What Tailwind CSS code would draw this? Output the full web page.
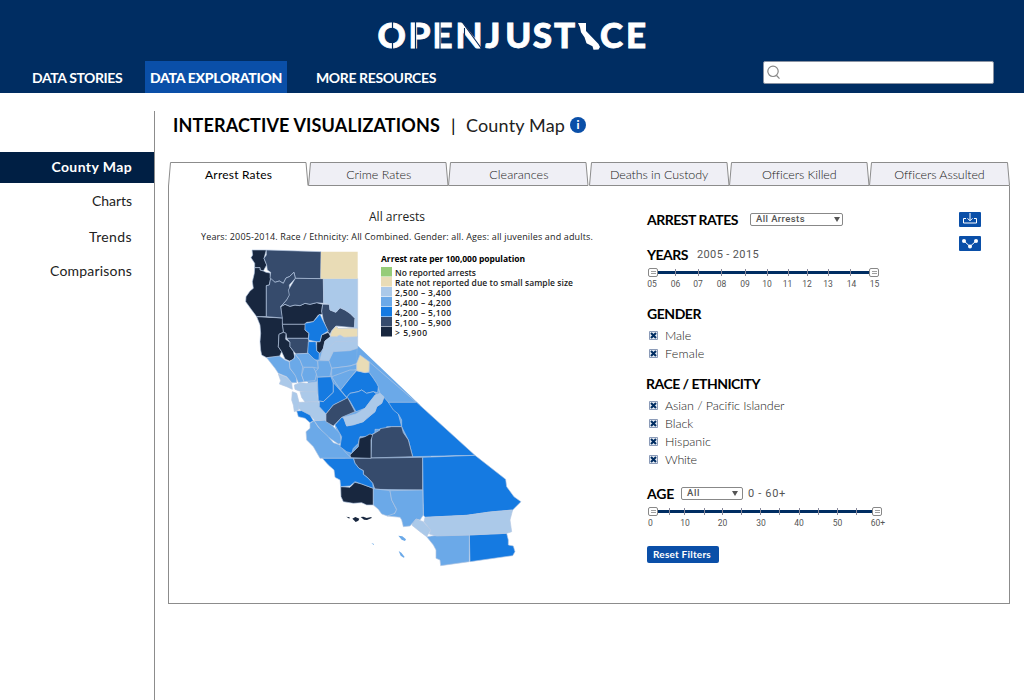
<!DOCTYPE html>
<html lang="en">
<head>
<meta charset="utf-8">
<title>OpenJustice – County Map</title>
<script src="https://cdn.jsdelivr.net/npm/@tailwindcss/browser@4"></script>
</head>
<body class="bg-white w-[1024px] h-[700px] overflow-hidden font-['Lato',sans-serif] text-black">
<svg class="hidden">
  <symbol id="tab" viewBox="0 0 141 25"><path d="M.5 24.500L2.500 1.500H138L140 24.500z" fill="#efeff5" stroke="#8c8c8c"/></symbol>
  <symbol id="check" viewBox="0 0 9 9"><path d="M.5.5h8v8h-8z" fill="#e8edf5" stroke="#8b9bb8"/><path d="M2 2l5 5M7 2l-5 5" stroke="#002d62" stroke-width="2.100"/></symbol>
</svg>
<header class="h-[93px] bg-[#002d62] relative">
  <svg class="block mx-auto w-[280px] h-[61px]" viewBox="372 0 280 61">
    <g font-family="Lato" font-weight="900" font-size="35" fill="#fff" stroke="#fff" stroke-width=".8">
      <text y="47.500" x="377.500 408.500 432.500 455.500 485.200 505.300 532.800 554">OPENJUST</text>
      <text y="47.500" x="600 626">CE</text>
    </g>
    <path d="M392.500 20v30M415.500 20v30M440 20v30" stroke="#002d62" stroke-width="1.200"/>
    <path d="M464.500 28v22M461.500 21l21 29" stroke="#002d62" stroke-width="1.100"/>
    <path d="M578 23h8v8l12.500 13 1.500 3-1.500 2.500-5 .3-1-3.500-6-3-2-6-3.500-5-1-5z" fill="#fff"/>
  </svg>
  <nav class="flex absolute left-0 top-[61px] h-8 text-white text-[14px] leading-[34px] font-bold whitespace-nowrap">
    <div class="w-[145px] pl-8"><span class="tracking-[-0.4px]">DATA STORIES</span></div>
    <div class="w-[142px] pl-[5px] bg-[#0a4fa8]"><span class="font-black tracking-[-0.3px]">DATA EXPLORATION</span></div>
    <div class="pl-[29px]"><span class="tracking-[-0.38px]">MORE RESOURCES</span></div>
  </nav>
  <div class="absolute left-[763px] top-[61px] w-[231px] h-[23px] bg-white border border-[#8a93a3] rounded-[2px]">
    <svg class="w-4 h-4 ml-[3px] mt-[3px]" viewBox="0 0 16 16" fill="none" stroke="#888" stroke-width="1.200"><circle cx="6" cy="6.300" r="5.200"/><path d="M9.500 10.500l3 3.200"/></svg>
  </div>
</header>
<div class="flex h-[607px]">
  <aside class="w-[155px] mt-[18px] border-r border-[#8c8c8c] pt-[41px] text-right text-[14px]">
    <div class="h-[31px] bg-[#001f44] text-white font-bold leading-[29px] pr-[22px]"><span class="tracking-[0.4px]">County Map</span></div>
    <div class="h-9 leading-9 pr-[22px] text-[#222]"><span class="tracking-[-0.05px]">Charts</span></div>
    <div class="h-9 leading-9 pr-[22px] text-[#222]"><span class="tracking-[0.39px]">Trends</span></div>
    <div class="h-9 leading-8 pr-[22px] text-[#222]"><span class="tracking-[0.2px]">Comparisons</span></div>
  </aside>
  <main class="w-[869px] pl-[13px]">
    <h1 class="flex items-center h-[64px] pl-[5px] text-[18px] whitespace-nowrap"><span class="font-bold w-[267px] tracking-[0.15px]">INTERACTIVE VISUALIZATIONS</span><span class="ml-[11px] w-[15px]">|</span><span class="w-[99px] tracking-[0.16px] text-[#222]">County Map</span>
      <svg class="w-4 h-4 ml-[5px]" viewBox="0 0 16 16"><circle cx="8" cy="8" r="8" fill="#0a4fa8"/><text x="8" y="12" text-anchor="middle" font-size="11.500" font-weight="900" font-family="Lato" fill="#fff">i</text></svg>
    </h1>
    <div class="mt-[4px] w-[842px]">
      <div class="grid grid-cols-6 w-[841px] h-[25px] text-[12.500px] font-light leading-[27px] text-center text-[#222] [&>div]:relative [&>div]:pl-[1px] [&_svg]:absolute [&_svg]:left-0 [&_svg]:top-0 [&_svg]:w-[141px] [&_svg]:h-[25px] [&_span]:relative whitespace-nowrap">
        <div class="text-black font-normal text-[12px]"><svg class="overflow-visible" viewBox="0 0 141 25"><path d="M.5 25L2.500 1.500H138L140 24.500" fill="#fff" stroke="#8c8c8c"/></svg><span class="tracking-[0.2px]">Arrest Rates</span></div>
        <div><svg><use href="#tab"/></svg><span>Crime Rates</span></div>
        <div><svg><use href="#tab"/></svg><span class="tracking-[0.08px]">Clearances</span></div>
        <div><svg><use href="#tab"/></svg><span class="tracking-[-0.08px]">Deaths in Custody</span></div>
        <div><svg><use href="#tab"/></svg><span class="tracking-[-0.1px]">Officers Killed</span></div>
        <div><svg class="overflow-visible" viewBox="0 0 141 25"><path d="M.5 24.500L2.500 1.500H138.500L140.500 24.500z" fill="#efeff5" stroke="#8c8c8c"/></svg><span class="tracking-[-0.1px]">Officers Assulted</span></div>
      </div>
      <section class="flex h-[418px] border border-t-0 border-[#8c8c8c]">
        <div class="w-[478px] pt-[22px] font-['Open_Sans',sans-serif] text-[#222]">
          <div class="text-center pr-[22px] text-[12px] leading-[18px]"><span class="tracking-[0.03px]">All arrests</span></div>
          <div class="pl-8 pt-[3px] text-[9px] leading-[16px] whitespace-nowrap"><span class="tracking-[0.15px]">Years: 2005-2014. Race / Ethnicity: All Combined. Gender: all. Ages: all juveniles and adults.</span></div>
          <div class="flex">
          <svg class="w-[290px] h-[325px] ml-[71px] shrink-0" viewBox="240 245 290 325" stroke="#b4c8e2" stroke-width="1.900" stroke-linejoin="round">
            <path stroke="none" fill="#6ba9e8" d="M300 345h57l63 60 15 70-20 50-60-35-25-80-32-40z"/>
            <!-- northern counties -->
            <g transform="translate(240 245) scale(.33333)">
              <g fill="#18273f">
                <path d="M36 15H79L72 40 80 60 70 78 60 75V68H44V55L33 38 38 30z"/>
                <path d="M44 68H60V75L70 78 78 82 90 84 92 100 88 120 79 122V215H50L35 195 17 170 18 155 30 138 40 130 37 110 43 85z"/>
                <path d="M122 185L135 178 150 184 165 180 180 182 195 175 210 178 230 173 248 178 245 200 249 207 235 210 220 230 200 232 197 238H127z"/>
                <path d="M127 238H197L195 255 207 265 205 280H140L138 265 130 262z"/>
                <path d="M50 215L127 219V238L130 262 117 268 115 305 125 320 118 335 80 338 65 330 62 315 60 290 62 265 60 240z"/>
                <path d="M117 268L130 262 138 265 137 283 150 292V305L160 318 164 335 160 345 148 348 135 342 125 320 115 305z"/>
                <path d="M230 290H240L245 270 265 262 272 275 255 288 250 310 240 325 230 318z"/>
              </g>
              <g fill="#364b6c">
                <path d="M79 15L243 20 242 101 166 100 162 82 148 95 138 99 130 115 118 108 105 112 90 100 92 82 82 75 80 60 72 40 79 30z"/>
                <path d="M92 100L105 112 118 108 130 115 138 99 148 95 162 82 166 100 148 120 150 150 140 165 122 185 127 219 79 215V122L88 120z"/>
                <path d="M166 100L250 101 251 175 230 173 210 178 195 175 180 182 165 180 150 184 135 178 122 185 140 165 148 150 145 135z"/>
                <path d="M248 178L268 178 270 195 288 202 300 188 315 195 330 205 345 220 343 248 288 243 275 258 270 268 262 258 250 225 245 200z"/>
                <path d="M140 280H205L207 290 203 325 168 327 160 318 150 305V292z"/>
              </g>
              <g fill="#abc9e9">
                <path d="M250 101H353V250H343L345 220 330 205 315 195 300 188 288 202 270 195 268 178 251 175z"/>
                <path d="M272 275L290 275 300 270 312 277 353 275V310L330 317 280 320 267 347 240 345 245 325 250 310 255 288z"/>
                <path d="M250 312L265 310 285 290 353 288" fill="none"/>
              </g>
              <g fill="#e9dcb6"><path stroke="none" d="M243 20H353V101H242z"/><path d="M270 275L275 258 288 243 295 250H353V275L312 277 300 270 290 275z"/></g>
              <g fill="#157ae1"><path d="M240 207L248 225 265 258 245 270 240 290 228 290 205 285 207 265 195 255V235L220 230z"/><path d="M205 290H228L230 318 238 325 237 345H225L210 335 203 325z"/></g>
            </g>
            <!-- bay area and central valley -->
            <g transform="translate(250 340) scale(.33333)">
              <g fill="#6ba9e8">
                <path d="M50 53L88 48 105 60 118 65 120 85 140 110V128L125 128 110 110 85 100 75 85z"/>
                <path d="M118 65L133 55 135 42 150 60 158 80 155 105 162 125 145 128 135 105 120 85z"/>
                <path d="M135 42L175 40 190 55 203 65 205 85 190 82H162L158 80 150 60z"/>
                <path d="M162 82H190L200 100 195 122 162 125 155 105z"/>
                <path d="M203 62H240L245 85 240 110 202 112 197 95 205 85z"/>
                <path d="M237 62L250 35 300 32 322 25V70L300 78 245 85z"/>
                <path d="M245 85L300 78 320 72V88L290 100 245 112z"/>
                <path d="M245 110L300 90 320 90 300 115 280 140 272 150 258 130z"/>
                <path d="M357 65L500 188H415L402 175 390 160 383 140 370 115 357 97z"/>
                <path d="M192 242L225 240 245 255 270 280 275 310 265 312 225 285 205 260z"/>
                <path d="M192 242L205 262 235 290 250 308 270 315 285 335 305 355H210L190 320 170 300 168 275 180 265V250z"/>
                <path stroke="none" d="M322 25L358 55V68L330 45 320 70z"/>
              </g>
              <g fill="#abc9e9">
                <path d="M85 102L110 112 125 128 127 148 110 140 88 132 92 122z"/>
                <path d="M133 135L150 128 170 130 202 125V155L175 158 145 152 135 148z"/>
                <path d="M150 155L202 155 205 185 165 186 155 172z"/>
                <path d="M127 155L140 160 148 190 145 210 133 215 130 195 125 180z"/>
                <path d="M148 187L205 185 215 205 228 222 228 240 195 242 180 225 155 212 145 205z"/>
              </g>
              <g fill="#157ae1">
                <path d="M140 213L155 212 180 225 190 242 180 248 165 235 145 230z"/>
                <path d="M202 112L243 110 250 130V157L220 185 205 183z"/>
                <path d="M250 128L292 175 250 195 228 222 208 200V183L220 185 250 157z"/>
                <path d="M320 92L345 98 357 97 370 115 380 130 385 140 383 158 370 155 350 160 335 150 325 155 300 160 290 172 272 150 300 115z"/>
                <path d="M290 172L300 160 325 155 335 150 350 160 370 155 380 162 360 185 345 205 318 215 298 180z"/>
                <path d="M402 172L415 187 430 200 445 222 455 260H410V268H375V278L355 290H330L325 310 310 325 305 340 290 335 270 320 275 290 255 255 275 232 282 235 290 258 340 245 375 215 380 200 395 190z"/>
                <path d="M415 187H500L675 346 488 350 475 300 455 260 455 240 445 222 430 210z"/>
              </g>
              <path fill="#364b6c" d="M293 173L315 215 275 232 250 258 228 245V222L250 195z"/>
              <path fill="#e9dcb6" d="M330 45L358 65 357 95 345 98 320 92V70z"/>
              <path fill="#abc9e9" d="M280 232L318 222 345 205 375 165 390 160 402 170 395 190 380 200 375 215 350 235 340 245 310 255 290 258 285 245z"/>
            </g>
            <!-- southern counties -->
            <g transform="translate(310 420) scale(.33333)">
              <g fill="#364b6c"><path d="M185 45L210 30V26L245 20H275L280 38 295 60 308 110 183 114z"/><path d="M130 115L338 112V210L195 208 188 190 175 175 160 163V152L147 145 135 130z"/></g>
              <g fill="#18273f"><path d="M148 55L165 50 180 42 188 45 183 60V115L123 113 120 105 145 80z"/><path d="M92 200L120 202 135 187 155 192 190 205V255H170L155 248 130 250 100 245 93 230z"/>
              <path stroke="none" d="M127 296l9-5 12 5-3 6-8 4-5-5zM152 291l8-1 10 4 14-3 1 3-14 6-9-1zM109 290l10 2-1 4z"/></g>
              <g fill="#157ae1"><path d="M37 115H130L135 130 147 145 160 152V163L175 175 188 190 190 205 155 192 135 185 120 198 92 200 90 180 75 172 72 150 55 135z"/><path d="M338 112L495 106 587 178 590 200 612 230 633 245 608 270 540 276 470 286 345 292 340 285z"/><path d="M478 345L590 340 595 360V375L610 378 615 395 608 407 480 425z"/></g>
              <g fill="#6ba9e8"><path d="M190 206L240 212 245 240 260 270 250 285 232 288 215 282 205 268 190 255z"/><path d="M240 212L338 210 340 285 330 300 318 297 300 318 280 320 275 300 270 292 232 288 255 280 260 268 245 240z"/><path d="M350 350L380 346 478 345V425L392 437 390 420 378 415V390L370 375z"/>
              <path stroke="none" d="M265 347l12 2 11 9-3 5-10-4zM266 393l8 5 10 13-3 2-9-6zM184 369l8 3-1 3z"/></g>
              <g fill="#abc9e9"><path d="M305 315L318 297 340 305 362 330 350 350 330 335z"/><path d="M345 292L470 286 540 276 608 270 600 300 605 335 590 340 478 345 380 348 358 342 362 330 342 305z"/></g>
            </g>
          </svg>
          <svg class="w-[200px] h-[90px] mt-[6px] ml-[-149px] shrink-0 overflow-visible" viewBox="381 251 200 90" font-family="Open Sans" font-weight="600" font-size="8.500" fill="#222">
            <text x="381" y="262" font-weight="700" textLength="144" fill="#000">Arrest rate per 100,000 population</text>
            <g><rect x="381" y="267" width="11" height="9.500" fill="#96cc78"/><rect x="381" y="277" width="11" height="9.500" fill="#e9dcb6"/><rect x="381" y="287" width="11" height="9.500" fill="#abc9e9"/><rect x="381" y="297" width="11" height="9.500" fill="#6ba9e8"/><rect x="381" y="307" width="11" height="9.500" fill="#157ae1"/><rect x="381" y="317" width="11" height="9.500" fill="#364b6c"/><rect x="381" y="327" width="11" height="9.500" fill="#18273f"/></g>
            <text x="395" y="276" textLength="81">No reported arrests</text>
            <text x="395" y="286" textLength="178">Rate not reported due to small sample size</text>
            <text x="395" y="296" textLength="56">2,500 – 3,400</text>
            <text x="395" y="306" textLength="56">3,400 – 4,200</text>
            <text x="395" y="316" textLength="56">4,200 – 5,100</text>
            <text x="395" y="326" textLength="56">5,100 – 5,900</text>
            <text x="395" y="336" textLength="32">&gt; 5,900</text>
          </svg>
          </div>
        </div>
        <div class="w-[312px] pt-[22px] whitespace-nowrap text-[12px] text-[#555]">
          <div class="flex items-center h-[22px]"><b class="w-[91px] tracking-[-0.48px] text-[14px] text-black">ARREST RATES</b>
            <div class="ml-3 w-[93px] h-[13px] border border-[#888] rounded-[2px] flex items-center justify-between pl-[5px] pr-[2px] font-['Roboto',sans-serif] font-medium text-[9.500px] text-[#555]"><span class="tracking-[0.41px]">All Arrests</span><i class="w-0 h-0 border-x-[3px] border-x-transparent border-t-[5px] border-t-[#555]"></i></div></div>
          <div class="flex items-center h-[22px] mt-[13px]"><b class="w-[41px] tracking-[-0.51px] text-[14px] text-black">YEARS</b><span class="ml-[9px] pt-[3px] tracking-[0.37px] font-['Roboto',sans-serif] text-[11px]">2005 - 2015</span></div>
          <svg class="w-[240px] h-[26px] block" viewBox="647 265 240 26" font-family="Roboto" font-size="8.500" fill="#555" text-anchor="middle">
            <rect x="652" y="271" width="222" height="3" fill="#002d62"/>
            <path stroke="#889" d="M675.500 269v7M698.500 269v7M721.500 269v7M745.500 269v7M767.500 269v7M788.500 269v7M807.500 269v7M828.500 269v7M850.500 269v7"/>
            <g fill="#fff" stroke="#888"><rect x="648.500" y="268.500" width="9" height="8" rx="1.500"/><rect x="869.500" y="268.500" width="9" height="8" rx="1.500"/><path d="M651 271.500h5M651 273.500h5M872 271.500h5M872 273.500h5" stroke-width=".8"/></g>
            <text x="652" y="287">05</text><text x="675.500" y="287">06</text><text x="698" y="287">07</text><text x="721.500" y="287">08</text><text x="745" y="287">09</text><text x="767" y="287">10</text><text x="787.500" y="287">11</text><text x="807" y="287">12</text><text x="828" y="287">13</text><text x="851.500" y="287">14</text><text x="874.500" y="287">15</text>
          </svg>
          <div class="mt-[12px] h-[23px] leading-[22px]"><b class="tracking-[-0.45px] text-[14px] text-black">GENDER</b></div>
          <div class="text-[12.500px] font-light text-[#222] [&>div]:flex [&>div]:items-center [&>div]:h-[18px] [&_span]:pt-[2px] [&_svg]:w-[9px] [&_svg]:h-[9px] [&_svg]:ml-[2px] [&_svg]:mr-[7px]">
            <div><svg><use href="#check"/></svg><span class="tracking-[-0.03px]">Male</span></div>
            <div><svg><use href="#check"/></svg><span class="tracking-[0.18px]">Female</span></div>
          </div>
          <div class="mt-[11px] ml-[-1px] h-[23px] leading-[22px]"><b class="tracking-[-0.51px] text-[14px] text-black">RACE / ETHNICITY</b></div>
          <div class="text-[12.500px] font-light text-[#222] [&>div]:flex [&>div]:items-center [&>div]:h-[18px] [&_span]:pt-[2px] [&_svg]:w-[9px] [&_svg]:h-[9px] [&_svg]:ml-[2px] [&_svg]:mr-[7px]">
            <div><svg><use href="#check"/></svg><span class="tracking-[-0.08px]">Asian / Pacific Islander</span></div>
            <div><svg><use href="#check"/></svg><span class="tracking-[-0.05px]">Black</span></div>
            <div><svg><use href="#check"/></svg><span>Hispanic</span></div>
            <div><svg><use href="#check"/></svg><span class="tracking-[-0.3px]">White</span></div>
          </div>
          <div class="flex items-center h-[22px] mt-[14px]"><b class="w-[27px] tracking-[-0.21px] text-[14px] text-black">AGE</b>
            <div class="ml-[7px] w-[62px] h-[13px] border border-[#888] rounded-[2px] flex items-center justify-between pl-[5px] pr-[4px] font-['Roboto',sans-serif] font-medium text-[9.500px] text-[#555]"><span class="tracking-[0.61px]">All</span><i class="w-0 h-0 border-x-[3px] border-x-transparent border-t-[5px] border-t-[#555]"></i></div><span class="ml-[5px] pt-[2px] tracking-[0.67px] font-['Roboto',sans-serif] text-[11px]">0 - 60+</span></div>
          <svg class="w-[240px] h-[26px] block" viewBox="647 504 240 26" font-family="Roboto" font-size="8.500" fill="#555" text-anchor="middle">
            <rect x="652" y="510" width="225" height="3" fill="#002d62"/>
            <path stroke="#889" d="M669.500 508v7M684.500 508v7M704.500 508v7M722.500 508v7M741.500 508v7M760.500 508v7M779.500 508v7M799.500 508v7M818.500 508v7M837.500 508v7M856.500 508v7"/>
            <g fill="#fff" stroke="#888"><rect x="648.500" y="507.500" width="9" height="8" rx="1.500"/><rect x="872.500" y="507.500" width="9" height="8" rx="1.500"/><path d="M651 510.500h5M651 512.500h5M875 510.500h5M875 512.500h5" stroke-width=".8"/></g>
            <text x="650.500" y="526">0</text><text x="685" y="526">10</text><text x="722.500" y="526">20</text><text x="761" y="526">30</text><text x="799" y="526">40</text><text x="837.500" y="526">50</text><text x="878" y="526">60+</text>
          </svg>
          <div class="mt-[16px] w-[72px] h-[17px] bg-[#0a4fa8] rounded-[2px] text-white text-center font-bold text-[10px] leading-[17px] pr-[2px]"><span class="tracking-[0.22px]">Reset Filters</span></div>
        </div>
        <div class="pt-[26px] flex flex-col gap-[9px]">
          <svg class="w-[22px] h-[15px]" viewBox="0 0 22 15"><rect width="22" height="15" rx="1" fill="#0a4fa8"/><path d="M11 1v7.500M8.500 6.300L11 8.800l2.500-2.500M7 6.500H4.500V11h13V6.500H15" fill="none" stroke="#fff" stroke-width="1"/></svg>
          <svg class="w-[22px] h-[15px]" viewBox="0 0 22 15"><rect width="22" height="15" rx="1" fill="#0a4fa8"/><path d="M5 5l6 5.500L17 5" fill="none" stroke="#fff"/><g fill="#fff"><circle cx="5" cy="5" r="2"/><circle cx="11" cy="10.500" r="2"/><circle cx="17" cy="5" r="2"/></g></svg>
        </div>
      </section>
    </div>
  </main>
</div>
</body>
</html>
